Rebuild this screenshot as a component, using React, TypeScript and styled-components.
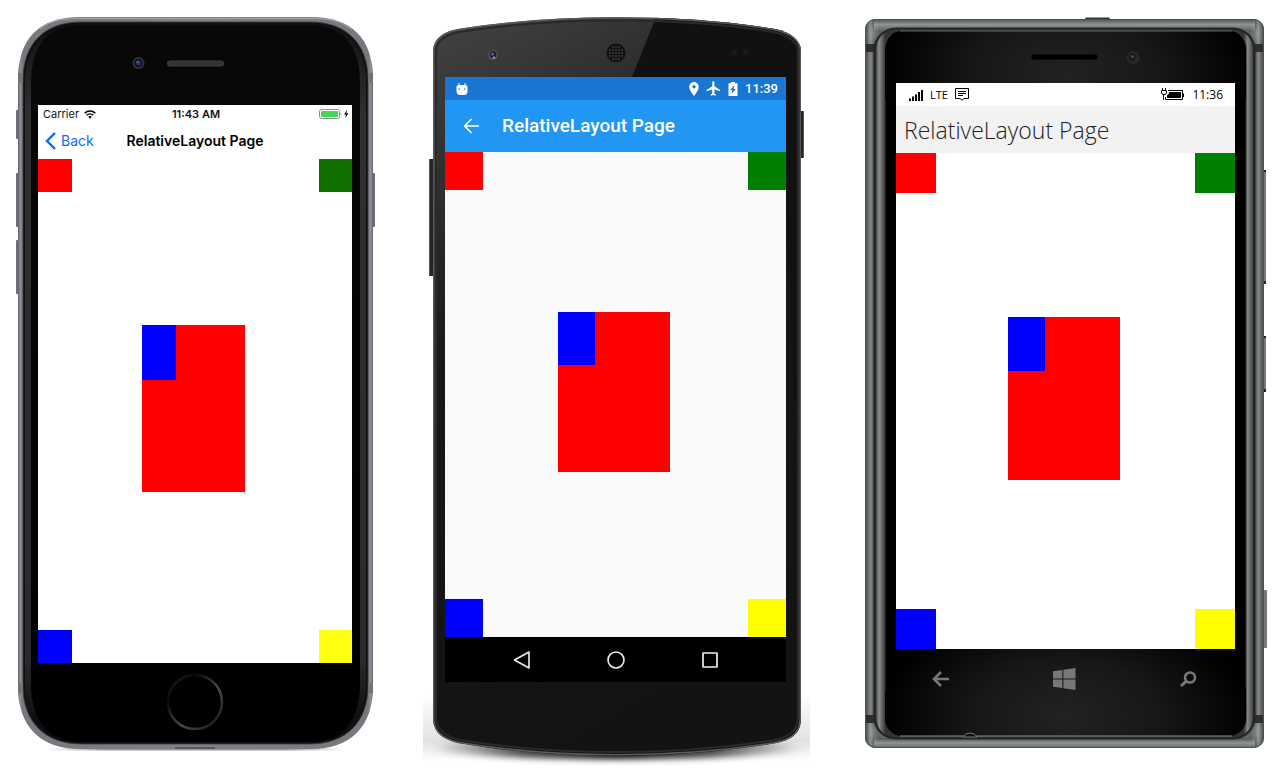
import React from "react";
import styled, { createGlobalStyle } from "styled-components";

const GlobalStyle = createGlobalStyle`
  *, *::before, *::after { box-sizing: border-box; }
  body { margin: 0; background: #fff; }
  h1, h2, p { margin: 0; }
`;

/* ---------- shared layout ---------- */

const Gallery = styled.main`
  display: flex;
  flex-wrap: wrap;
  justify-content: center;
  gap: 0 44px;
  padding: 0 12px 0 16px;
`;

const Device = styled.section<{ $width: number; $pad: string }>`
  position: relative;
  flex: none;
  display: flex;
  flex-direction: column;
  width: ${(p) => p.$width}px;
  min-height: 768px;
  padding: ${(p) => p.$pad};
`;

const Chassis = styled.svg`
  position: absolute;
  inset: 0;
  width: 100%;
  height: 768px;
`;

const Screen = styled.div<{ $bg: string; $font: string }>`
  position: relative;
  display: flex;
  flex-direction: column;
  background: ${(p) => p.$bg};
  font-family: ${(p) => p.$font};
`;

const Group = styled.div<{ $gap: number }>`
  display: flex;
  align-items: center;
  gap: ${(p) => p.$gap}px;
`;

const BoxCanvas = styled.div<{ $rows: string; $cols: string }>`
  display: grid;
  grid-template-rows: ${(p) => p.$rows};
  grid-template-columns: ${(p) => p.$cols};
`;

const Box = styled.div<{ $color: string; $area: string }>`
  background: ${(p) => p.$color};
  grid-area: ${(p) => p.$area};
`;

const IconButton = styled.button`
  display: flex;
  align-items: center;
  justify-content: center;
  padding: 0;
  border: 0;
  background: none;
  color: inherit;
  cursor: pointer;
`;

function Boxes({ rows, cols, green, yellow = "#ffff00" }: { rows: string; cols: string; green: string; yellow?: string }) {
  return (
    <BoxCanvas $rows={rows} $cols={cols}>
      <Box $color="#ff0000" $area="1 / 1" />
      <Box $color={green} $area="1 / 6" />
      <Box $color="#ff0000" $area="3 / 3 / 5 / 5" />
      <Box $color="#0000ff" $area="3 / 3" />
      <Box $color="#0000ff" $area="6 / 1" />
      <Box $color={yellow} $area="6 / 6" />
    </BoxCanvas>
  );
}

/* ---------- iPhone ---------- */

const IosStatus = styled.div`
  display: grid;
  grid-template-columns: 1fr auto 1fr;
  align-items: center;
  height: 18px;
  padding: 0 3px 0 5px;
  font-size: 11px;
  line-height: 18px;
  color: #111;
  > :last-child { justify-self: end; }
`;

const IosTime = styled.time`
  font-weight: 600;
`;

const IosNav = styled.header`
  display: grid;
  grid-template-columns: 1fr auto 1fr;
  align-items: center;
  height: 36px;
  padding: 0 7px;
`;

const IosBack = styled.button`
  display: flex;
  align-items: center;
  gap: 5px;
  padding: 0;
  border: 0;
  background: none;
  font: 400 14px/20px Inter, sans-serif;
  color: #0a6cff;
  cursor: pointer;
`;

const IosTitle = styled.h2`
  font-size: 14px;
  line-height: 20px;
  font-weight: 600;
  color: #000;
`;

function IPhone() {
  return (
    <Device $width={360} $pad="105px 24px 105px 22px" aria-label="iPhone">
      <Chassis viewBox="16 0 360 768" aria-hidden="true">
        <defs>
          <linearGradient id="iBody" x1="0" x2="1" y1="0" y2="0">
            <stop offset="0" stopColor="#5e5e64" />
            <stop offset="0.006" stopColor="#8f9098" />
            <stop offset="0.013" stopColor="#77777e" />
            <stop offset="0.5" stopColor="#808087" />
            <stop offset="0.987" stopColor="#77777e" />
            <stop offset="0.994" stopColor="#94949c" />
            <stop offset="1" stopColor="#5e5e64" />
          </linearGradient>
          <linearGradient id="iGlint" x1="0" x2="0" y1="0" y2="1">
            <stop offset="0" stopColor="#111" />
            <stop offset="0.12" stopColor="#2f2f2f" />
            <stop offset="0.88" stopColor="#2b2b2b" />
            <stop offset="1" stopColor="#050505" />
          </linearGradient>
          <linearGradient id="iHome" x1="0" x2="1" y1="0" y2="1">
            <stop offset="0" stopColor="#20242b" />
            <stop offset="0.25" stopColor="#08090b" />
            <stop offset="0.6" stopColor="#4a4b53" />
            <stop offset="1" stopColor="#0d0e10" />
          </linearGradient>
          <linearGradient id="iFace" x1="0" x2="0" y1="0" y2="1">
            <stop offset="0" stopColor="#080808" />
            <stop offset="1" stopColor="#000" />
          </linearGradient>
          <linearGradient id="iShadow" x1="0" x2="1" y1="0" y2="0">
            <stop offset="0" stopColor="#999" stopOpacity="0" />
            <stop offset="0.2" stopColor="#999" />
            <stop offset="0.8" stopColor="#999" />
            <stop offset="1" stopColor="#999" stopOpacity="0" />
          </linearGradient>
        </defs>
        <rect x="48" y="748" width="296" height="2.500" fill="url(#iShadow)" />
        <g fill="#6d6e74">
          <rect x="16" y="110" width="4" height="29" rx="1" />
          <rect x="16" y="173" width="4" height="54" rx="1" />
          <rect x="16" y="240" width="4" height="54" rx="1" />
          <rect x="371" y="173" width="4" height="54" rx="1" />
        </g>
        <path
          d="M18 79 C18 38 40 17 80 17 H311 C351 17 373 38 373 79 V687 C373 727 350 749 311 749 H80 C41 749 18 727 18 687 Z"
          fill="url(#iBody)"
        />
        <path d="M40 29 C51 20 64 18.500 80 18.500 H311 C327 18.500 340 20 351 29" fill="none" stroke="#a6a6ad" strokeWidth="1" />
        <path
          d="M23 80 C23 43 45 22 81 22 H310 C346 22 368 43 368 80 V686 C368 722 346 744 310 744 H81 C45 744 23 722 23 686 Z"
          fill="#111"
          stroke="#3b3b40"
          strokeWidth="0.800"
        />
        <path
          d="M25 82 C25 45 46 25 81 25 H310 C345 25 366 45 366 82 V684 C366 721 345 742 310 742 H81 C46 742 25 721 25 684 Z"
          fill="url(#iGlint)"
        />
        <path
          d="M31 84 C31 44 48 25 83 25 H308 C343 25 360 44 360 84 V684 C360 720 343 742 308 742 H83 C48 742 31 720 31 684 Z"
          fill="url(#iFace)"
        />
        <g fill="#6f7672">
          <rect x="18" y="73" width="5" height="10" />
          <rect x="368" y="73" width="5" height="10" />
          <rect x="18" y="683" width="5" height="10" />
          <rect x="368" y="683" width="5" height="10" />
        </g>
        <circle cx="138.500" cy="63" r="6" fill="#36363a" />
        <circle cx="138.500" cy="63" r="4.300" fill="#0b1220" />
        <circle cx="138.500" cy="63" r="2.500" fill="#22355f" />
        <circle cx="137.700" cy="62" r="1" fill="#6577a3" />
        <rect x="167" y="60.500" width="57" height="6" rx="3" fill="#3a3a3a" />
        <path d="M170 63.500 H222" stroke="#2a2a2a" strokeWidth="3" strokeDasharray="1 1" />
        <circle cx="195" cy="702" r="27" fill="none" stroke="url(#iHome)" strokeWidth="2.500" />
        <path d="M175 748 H215" stroke="#4b4b50" strokeWidth="1.500" />
      </Chassis>
      <Screen $bg="#fff" $font="Inter, sans-serif">
        <IosStatus>
          <Group $gap={5}>
            <span>Carrier</span>
            <svg width="12" height="9" viewBox="0 0 12 9" fill="none" stroke="#000" strokeWidth="1.600" aria-hidden="true">
              <path d="M0.700 3.300 A7.400 7.400 0 0 1 11.300 3.300" />
              <path d="M2.700 5.300 A4.700 4.700 0 0 1 9.300 5.300" />
              <path d="M6 8.700 L4.200 6.800 A2.600 2.600 0 0 1 7.800 6.800 Z" fill="#000" stroke="none" />
            </svg>
          </Group>
          <IosTime>11:43 AM</IosTime>
          <svg width="30" height="10" viewBox="0 0 30 10" aria-hidden="true">
            <rect x="0.500" y="0.500" width="20" height="9" rx="2" fill="#fff" stroke="#8d8d8d" />
            <rect x="2" y="2" width="17" height="6" rx="0.500" fill="#45d652" />
            <path d="M21.700 3.500 V6.500 Q23 5 21.700 3.500" fill="#777" />
            <path d="M28 1 L25 5.600 H27 L26.200 9 L29.500 4.200 H27.400 Z" fill="#000" />
          </svg>
        </IosStatus>
        <IosNav>
          <IosBack type="button">
            <svg width="11" height="18" viewBox="0 0 11 18" fill="none" stroke="currentColor" strokeWidth="2.400" aria-hidden="true">
              <path d="M10 1 L2 9 L10 17" />
            </svg>
            Back
          </IosBack>
          <IosTitle>RelativeLayout Page</IosTitle>
        </IosNav>
        <Boxes rows="33px 133px 55px 112px 138px 33px" cols="34px 70px 34px 69px 1fr 33px" green="#117000" yellow="#ffff11" />
      </Screen>
    </Device>
  );
}

/* ---------- Android ---------- */

const DroidStatus = styled.div`
  display: flex;
  align-items: center;
  justify-content: space-between;
  height: 23px;
  padding: 0 8px 0 11px;
  background: #1976d2;
  color: #fff;
  font-size: 13px;
  line-height: 23px;
  font-weight: 500;
`;

const DroidBar = styled.header`
  display: flex;
  align-items: center;
  gap: 22px;
  height: 52px;
  padding: 0 18px;
  background: #2196f3;
  color: #fff;
`;

const DroidTitle = styled.h2`
  font-size: 19px;
  line-height: 24px;
  font-weight: 500;
`;

const DroidKeys = styled.nav`
  display: flex;
  align-items: center;
  justify-content: center;
  gap: 76px;
  height: 45px;
  background: #000;
  color: #eee;
`;

function Android() {
  const holes = [-6, -3, 0, 3, 6];
  return (
    <Device $width={392} $pad="77px 26px 86px 25px" aria-label="Android phone">
      <Chassis viewBox="420 0 392 768" aria-hidden="true">
        <defs>
          <linearGradient id="dFace" x1="0" x2="0.300" y1="0" y2="1">
            <stop offset="0" stopColor="#434343" />
            <stop offset="0.120" stopColor="#383838" />
            <stop offset="0.450" stopColor="#171717" />
            <stop offset="1" stopColor="#131313" />
          </linearGradient>
          <linearGradient id="dShade" x1="0" x2="1" y1="0" y2="0">
            <stop offset="0" stopColor="#000" stopOpacity="0" />
            <stop offset="0.250" stopColor="#000" stopOpacity="0.700" />
            <stop offset="0.500" stopColor="#000" />
            <stop offset="0.750" stopColor="#000" stopOpacity="0.700" />
            <stop offset="1" stopColor="#000" stopOpacity="0" />
          </linearGradient>
          <linearGradient id="dSide" x1="0" x2="0" y1="0" y2="1">
            <stop offset="0" stopColor="#888" stopOpacity="0" />
            <stop offset="0.700" stopColor="#888" stopOpacity="0.250" />
            <stop offset="1" stopColor="#888" stopOpacity="0" />
          </linearGradient>
          <filter id="dBlur" x="-10%" width="120%" y="-50%" height="200%">
            <feGaussianBlur stdDeviation="3" />
          </filter>
          <clipPath id="dClip">
            <path d="M433 50 C434 38 443 32 458 29 C510 20.500 565 17.300 617 17.300 C669 17.300 724 20.500 775 29 C790 32 800 40 801 50 V720 C800 735 790 740 776 743 C724 752 669 755.500 617 755.500 C565 755.500 510 752 458 743 C443 739 434 733 433 720 Z" />
          </clipPath>
        </defs>
        <rect x="423" y="695" width="387" height="66" fill="url(#dSide)" />
        <ellipse cx="617" cy="748" rx="186" ry="11" fill="url(#dShade)" filter="url(#dBlur)" />
        <rect x="429" y="159" width="5" height="117" rx="1" fill="#252525" />
        <rect x="429" y="159" width="1" height="117" fill="#555" />
        <rect x="799" y="111" width="5" height="47" rx="1" fill="#252525" />
        <rect x="803" y="112" width="1" height="45" fill="#555" />
        <g clipPath="url(#dClip)">
          <rect x="430" y="14" width="374" height="745" fill="url(#dFace)" />
          <path d="M656 17 L632 77 H786 V200 L794 400 H804 V14 H657 Z" fill="#111" />
        </g>
        <path
          d="M433.800 50 C435 38.500 443 32.600 458 29.700 C510 21.300 565 18 617 18 C669 18 724 21.300 775 29.700 C790 33 799.300 40 800.200 50 V720 C799 734 790 739.500 776 742.300 C724 751 669 754.700 617 754.700 C565 754.700 510 751 458 742.300 C443 738.500 435 732.500 433.800 720 Z"
          fill="none"
          stroke="#5a5a5a"
          strokeWidth="1.500"
        />
        <path
          d="M436 50 C437 41 445 35 459 32 C510 24 565 20.500 617 20.500 C669 20.500 724 24 774 32 C788 35 797 42 798 50 V719 C797 731 789 737 775 740 C724 748 669 752 617 752 C565 752 510 748 459 740 C445 736 437 730 436 719 Z"
          fill="none"
          stroke="#2a2a2a"
          strokeWidth="2"
        />
        <circle cx="493" cy="55" r="4.800" fill="#5a5a5a" />
        <circle cx="493" cy="54.500" r="3.500" fill="#202033" />
        <circle cx="492.500" cy="54" r="1.500" fill="#5b5fa8" />
        <circle cx="494" cy="57.500" r="1" fill="#bbb" />
        <circle cx="616" cy="53" r="9.500" fill="#121212" />
        <g fill="#5c5650">
          {holes.map((y) =>
            holes
              .filter((x) => x * x + y * y < 70)
              .map((x) => <circle key={`${x}:${y}`} cx={616 + x} cy={53 + y} r="0.800" />)
          )}
        </g>
        <circle cx="734" cy="52.500" r="3" fill="#1a1a1a" />
        <circle cx="745.500" cy="52.500" r="2.500" fill="#1a1a1a" />
      </Chassis>
      <Screen $bg="#fafafa" $font="Roboto, sans-serif">
        <DroidStatus>
          <svg width="12" height="14" viewBox="0 0 12 14" aria-hidden="true">
            <path d="M3 1 V4 M9 1 V4" stroke="#fff" strokeWidth="1" />
            <path d="M0.500 5 Q0.500 3 2.500 3 H9.500 Q11.500 3 11.500 5 V9.500 Q11 13 8 13 H4 Q1 13 0.500 9.500 Z" fill="#fff" />
            <circle cx="3.200" cy="7" r="0.800" fill="#1976d2" />
            <circle cx="8.800" cy="7" r="0.800" fill="#1976d2" />
          </svg>
          <Group $gap={6}>
            <svg width="12" height="14" viewBox="0 0 12 14" fill="#fff" fillRule="evenodd" aria-hidden="true">
              <path d="M6 0 A4.800 4.800 0 0 0 1.200 4.800 C1.200 8.300 6 14 6 14 S10.800 8.300 10.800 4.800 A4.800 4.800 0 0 0 6 0 Z M6 3.100 A1.700 1.700 0 1 1 6 6.500 A1.700 1.700 0 1 1 6 3.100 Z" />
            </svg>
            <svg width="15" height="15" viewBox="2 1.500 19.500 21" fill="#fff" aria-hidden="true">
              <path d="M21 16v-2l-8-5V3.500c0-.83-.67-1.500-1.500-1.500S10 2.670 10 3.500V9l-8 5v2l8-2.500V19l-2 1.500V22l3.500-1 3.500 1v-1.500L13 19v-5.500l8 2.500z" />
            </svg>
            <svg width="12" height="14" viewBox="0 0 12 14" fill="#fff" fillRule="evenodd" aria-hidden="true">
              <path d="M4 0 H8 V1.300 H10.500 V14 H1.500 V1.300 H4 Z M7.500 3.300 L3.200 8 H5.300 L4.500 11.800 L8.800 6.900 H6.700 Z" />
            </svg>
            <time>11:39</time>
          </Group>
        </DroidStatus>
        <DroidBar>
          <IconButton type="button" aria-label="Navigate up">
            <svg width="17" height="16" viewBox="0 0 17 16" fill="none" stroke="currentColor" strokeWidth="1.600" aria-hidden="true">
              <path d="M8.500 1 L1.700 8 L8.500 15 M1.700 8 H16" />
            </svg>
          </IconButton>
          <DroidTitle>RelativeLayout Page</DroidTitle>
        </DroidBar>
        <Boxes rows="38px 122px 53px 107px 127px 38px" cols="38px 75px 37px 75px 1fr 38px" green="#008000" />
        <DroidKeys aria-label="System keys">
          <IconButton type="button" aria-label="Back">
            <svg width="18" height="18" viewBox="0 0 18 18" fill="none" stroke="currentColor" strokeWidth="1.600" strokeLinejoin="round">
              <path d="M16 1 V17 L1.500 9 Z" />
            </svg>
          </IconButton>
          <IconButton type="button" aria-label="Home">
            <svg width="18" height="18" viewBox="0 0 18 18" fill="none" stroke="currentColor" strokeWidth="1.600">
              <circle cx="9" cy="9" r="8" />
            </svg>
          </IconButton>
          <IconButton type="button" aria-label="Recent apps">
            <svg width="18" height="18" viewBox="0 0 18 18" fill="none" stroke="currentColor" strokeWidth="1.700">
              <rect x="2" y="2" width="14" height="14" rx="0.500" />
            </svg>
          </IconButton>
        </DroidKeys>
      </Screen>
    </Device>
  );
}

/* ---------- Windows phone ---------- */

const WinStatus = styled.div`
  display: flex;
  align-items: center;
  justify-content: space-between;
  height: 23px;
  padding: 0 12px;
  color: #000;
  font-size: 12px;
  line-height: 23px;
`;

const WinNetwork = styled.span`
  font-size: 11px;
`;

const WinHeader = styled.header`
  display: flex;
  align-items: center;
  height: 47px;
  padding: 0 8px;
  background: #f2f2f2;
  color: #222;
`;

const WinTitle = styled.h2`
  font-size: 23px;
  line-height: 32px;
  font-weight: 300;
`;

const WinKeys = styled.nav`
  position: relative;
  display: flex;
  align-items: center;
  justify-content: space-between;
  height: 60px;
  padding: 0 38px 0 36px;
  color: #777;
`;

function WindowsPhone() {
  return (
    <Device $width={412} $pad="83px 33px 59px 40px" aria-label="Windows phone">
      <Chassis viewBox="856 0 412 768" aria-hidden="true">
        <defs>
          <linearGradient id="wBody" x1="0" x2="1" y1="0" y2="0">
            <stop offset="0" stopColor="#454948" />
            <stop offset="0.008" stopColor="#666b69" />
            <stop offset="0.014" stopColor="#858a88" />
            <stop offset="0.022" stopColor="#4d5150" />
            <stop offset="0.050" stopColor="#6a6f6d" />
            <stop offset="0.950" stopColor="#6a6f6d" />
            <stop offset="0.978" stopColor="#4d5150" />
            <stop offset="0.986" stopColor="#858a88" />
            <stop offset="0.992" stopColor="#666b69" />
            <stop offset="1" stopColor="#454948" />
          </linearGradient>
          <linearGradient id="wEdge" x1="0" x2="0" y1="0" y2="1">
            <stop offset="0" stopColor="#4c4f4e" />
            <stop offset="0.500" stopColor="#909593" />
            <stop offset="1" stopColor="#656a68" />
          </linearGradient>
          <linearGradient id="wRim" x1="0" x2="1" y1="0" y2="0">
            <stop offset="0" stopColor="#444" />
            <stop offset="0.008" stopColor="#8e8e8e" />
            <stop offset="0.025" stopColor="#333" />
            <stop offset="0.975" stopColor="#333" />
            <stop offset="0.986" stopColor="#858585" />
            <stop offset="1" stopColor="#444" />
          </linearGradient>
          <radialGradient id="wCorner">
            <stop offset="0" stopColor="#c0c5c3" stopOpacity="0.450" />
            <stop offset="1" stopColor="#c0c5c3" stopOpacity="0" />
          </radialGradient>
          <radialGradient id="wGlow" cx="0.500" cy="0.500" r="0.500">
            <stop offset="0" stopColor="#222" />
            <stop offset="0.500" stopColor="#171717" />
            <stop offset="1" stopColor="#000" />
          </radialGradient>
          <clipPath id="wOuter"><rect x="865" y="19" width="399" height="729" rx="10" /></clipPath>
          <clipPath id="wGlass"><rect x="885" y="31" width="361" height="705" rx="17" /></clipPath>
        </defs>
        <g fill="#777a79">
          <rect x="1262" y="170" width="4" height="114" rx="1" />
          <rect x="1262" y="336" width="4" height="56" rx="1" />
          <rect x="1262" y="590" width="5" height="58" rx="1" />
        </g>
        <g fill="#222">
          <rect x="1264" y="170" width="2" height="2" />
          <rect x="1264" y="281" width="2" height="3" />
          <rect x="1264" y="336" width="2" height="2" />
          <rect x="1264" y="389" width="2" height="3" />
        </g>
        <rect x="1085" y="17.500" width="25" height="4" rx="1.500" fill="#333" />
        <g clipPath="url(#wOuter)">
          <rect x="865" y="19" width="399" height="729" fill="url(#wBody)" />
          <rect x="874" y="19" width="381" height="11" fill="url(#wEdge)" />
          <rect x="874" y="738" width="381" height="10" fill="url(#wEdge)" />
          <ellipse cx="873" cy="34" rx="7" ry="14" fill="url(#wCorner)" />
          <ellipse cx="1256" cy="34" rx="7" ry="14" fill="url(#wCorner)" />
          <ellipse cx="873" cy="732" rx="7" ry="15" fill="url(#wCorner)" />
          <ellipse cx="1256" cy="732" rx="7" ry="15" fill="url(#wCorner)" />
          <path d="M865 48 H874 M1255 48 H1264 M865 719 H874 M1255 719 H1264" stroke="#2d2f2e" strokeWidth="8" />
        </g>
        <rect x="865.500" y="19.500" width="398" height="728" rx="10" fill="none" stroke="#4c504f" />
        <rect x="873.500" y="27.500" width="382" height="712" rx="22" fill="#242625" />
        <rect x="876" y="29.500" width="377" height="708" rx="20" fill="url(#wRim)" />
        <rect x="885" y="31" width="361" height="705" rx="17" fill="#000" stroke="#3b3b3b" />
        <g clipPath="url(#wGlass)">
          <ellipse cx="1066" cy="73" rx="185" ry="115" fill="url(#wGlow)" />
          <ellipse cx="1066" cy="715" rx="185" ry="110" fill="url(#wGlow)" />
        </g>
        <path d="M900 31 H1232" stroke="#666" />
        <path d="M900 736 H1232" stroke="#8a8a8a" />
        <path d="M963 737 Q965 733 970 733 Q975 733 977 737 Z" fill="#111" stroke="#777" strokeWidth="1" />
        <rect x="895" y="83" width="341" height="566" fill="#000" />
        <rect x="1031" y="54" width="67" height="6" rx="3" fill="#000" stroke="#222" strokeWidth="0.600" />
        <circle cx="1133" cy="57.500" r="6.500" fill="#292929" />
        <circle cx="1132.500" cy="57" r="4" fill="#1c1c1c" />
        <circle cx="1132.500" cy="56.500" r="1.200" fill="#555" />
      </Chassis>
      <Screen $bg="#fff" $font={`"Open Sans", sans-serif`}>
        <WinStatus>
          <Group $gap={7}>
            <svg width="15" height="12" viewBox="0 0 15 12" aria-hidden="true">
              <path d="M1 9.500 H3 V12 H1 Z M4 7.500 H6 V12 H4 Z M7 5.500 H9 V12 H7 Z M10 3 H12 V12 H10 Z M13 1 H15 V12 H13 Z" />
            </svg>
            <WinNetwork>LTE</WinNetwork>
            <svg width="14" height="13" viewBox="0 0 14 13" fill="none" stroke="#000" aria-hidden="true">
              <path d="M0.500 0.500 H13.500 V10.500 H9 L7 12.300 L5 10.500 H0.500 Z M3 3.500 H11 M3 5.500 H11 M3 7.500 H8" />
            </svg>
          </Group>
          <Group $gap={8}>
            <svg width="23" height="14" viewBox="0 0 23 14" fill="none" stroke="#000" aria-hidden="true">
              <path d="M1.500 0 V2.500 M4.500 0 V2.500 M0.500 2.500 H5.500 V5 Q5.500 6.500 3 6.500 Q0.500 6.500 0.500 5 Z M2.500 6.500 V12" />
              <path d="M7 2.500 H21.500 V11.500 H4.500 V9" />
              <path d="M22.500 5.500 V9" />
              <path d="M8 4 H20 V10 H6 V7.500 L8 5.500 Z" fill="#000" stroke="none" />
            </svg>
            <time>11:36</time>
          </Group>
        </WinStatus>
        <WinHeader>
          <WinTitle>RelativeLayout Page</WinTitle>
        </WinHeader>
        <Boxes rows="40px 124px 54px 109px 129px 40px" cols="40px 72px 37px 75px 1fr 40px" green="#008000" />
      </Screen>
      <WinKeys aria-label="Hardware keys">
        <IconButton type="button" aria-label="Back">
          <svg width="18" height="16" viewBox="0 0 18 16" fill="none" stroke="currentColor" strokeWidth="2.600">
            <path d="M9 1 L2 8 L9 15 M2 8 H17" />
          </svg>
        </IconButton>
        <IconButton type="button" aria-label="Start">
          <svg width="23" height="22" viewBox="0 0 23 22" fill="currentColor">
            <path d="M0 3.200 L9.300 1.900 V10.400 H0 Z M10.400 1.700 L22.500 0 V10.400 H10.400 Z M0 11.500 H9.300 V20 L0 18.700 Z M10.400 11.500 H22.500 V22 L10.400 20.200 Z" />
          </svg>
        </IconButton>
        <IconButton type="button" aria-label="Search">
          <svg width="18" height="16" viewBox="0 0 18 16" fill="none" stroke="currentColor">
            <circle cx="11" cy="6.500" r="5" strokeWidth="2.600" />
            <path d="M7.300 10.200 L2 15" strokeWidth="3" />
          </svg>
        </IconButton>
      </WinKeys>
    </Device>
  );
}

export default function App() {
  return (
    <>
      <GlobalStyle />
      <Gallery>
        <IPhone />
        <Android />
        <WindowsPhone />
      </Gallery>
    </>
  );
}
